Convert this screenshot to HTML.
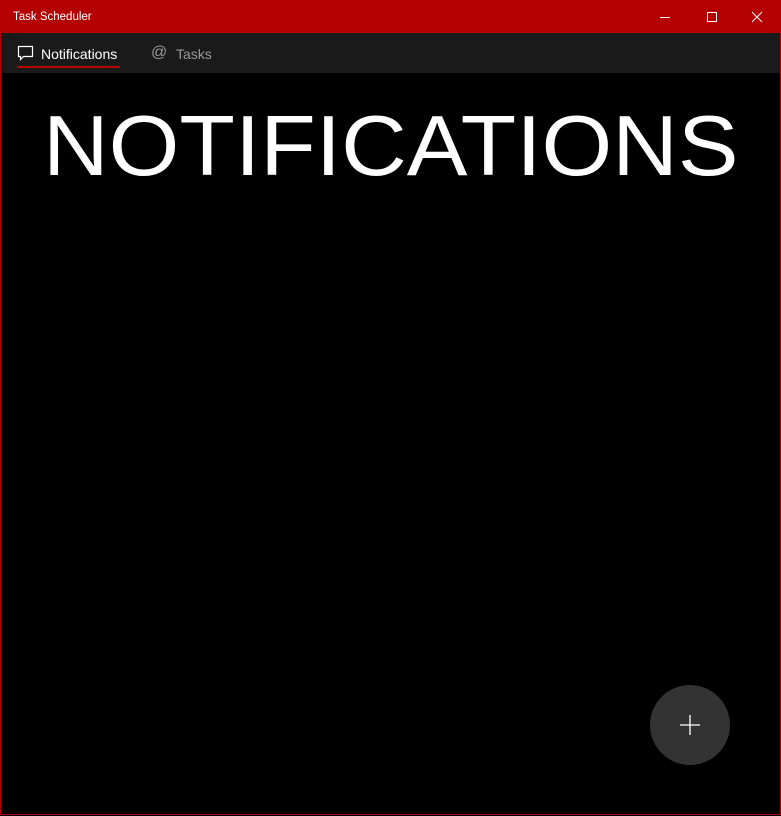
<!DOCTYPE html>
<html><head><style>
body{margin:0;width:781px;height:816px;background:#000;overflow:hidden;font-family:"Liberation Sans",sans-serif;position:relative}
.win{position:absolute;left:0;top:0;width:779px;height:814px;border:1px solid #b40000;border-top:none}
.title{position:absolute;left:0;top:0;width:781px;height:33px;background:#b40000;color:#fff;font-size:11.5px}
.title span{position:absolute;left:13px;top:11px}
.nav{position:absolute;left:1px;top:33px;width:779px;height:40px;background:#1a1a1a}
.t{position:absolute;top:13px;font-size:14px}
.big{position:absolute;left:43px;top:104px;font-size:85px;line-height:1;color:#fff;white-space:nowrap;transform-origin:0 0;transform:scaleX(1.07)}
.fab{position:absolute;left:650px;top:685px;width:80px;height:80px;border-radius:50%;background:#333}
</style></head><body>
<div class="title"><span>Task Scheduler</span>
<svg style="position:absolute;left:630px;top:0" width="151" height="33"><g stroke="#fff" stroke-width="1" fill="none">
<line x1="30" y1="17.5" x2="40" y2="17.5"/>
<rect x="77.5" y="12.5" width="9" height="9"/>
<line x1="122" y1="12" x2="132" y2="22"/><line x1="132" y1="12" x2="122" y2="22"/></g></svg>
</div>
<div class="win"></div>
<div class="nav">
<svg style="position:absolute;left:16px;top:12px" width="18" height="18"><path d="M1.5 1.5h14v10h-9l-3 3v-3h-2z" stroke="#fff" stroke-width="1.2" fill="none"/></svg>
<div class="t" style="left:40px;color:#fff">Notifications</div>
<div style="position:absolute;left:16px;top:33px;width:103px;height:2px;background:#b40000"></div>
<div class="t" style="left:150px;color:#999;font-size:16px;top:11px">@</div>
<div class="t" style="left:175px;color:#999">Tasks</div>
</div>
<div class="big">NOTIFICATIONS</div>
<div class="fab"><svg width="80" height="80"><g stroke="#fff" stroke-width="1.3"><line x1="40" y1="30" x2="40" y2="50"/><line x1="30" y1="40" x2="50" y2="40"/></g></svg></div>
</body></html>
